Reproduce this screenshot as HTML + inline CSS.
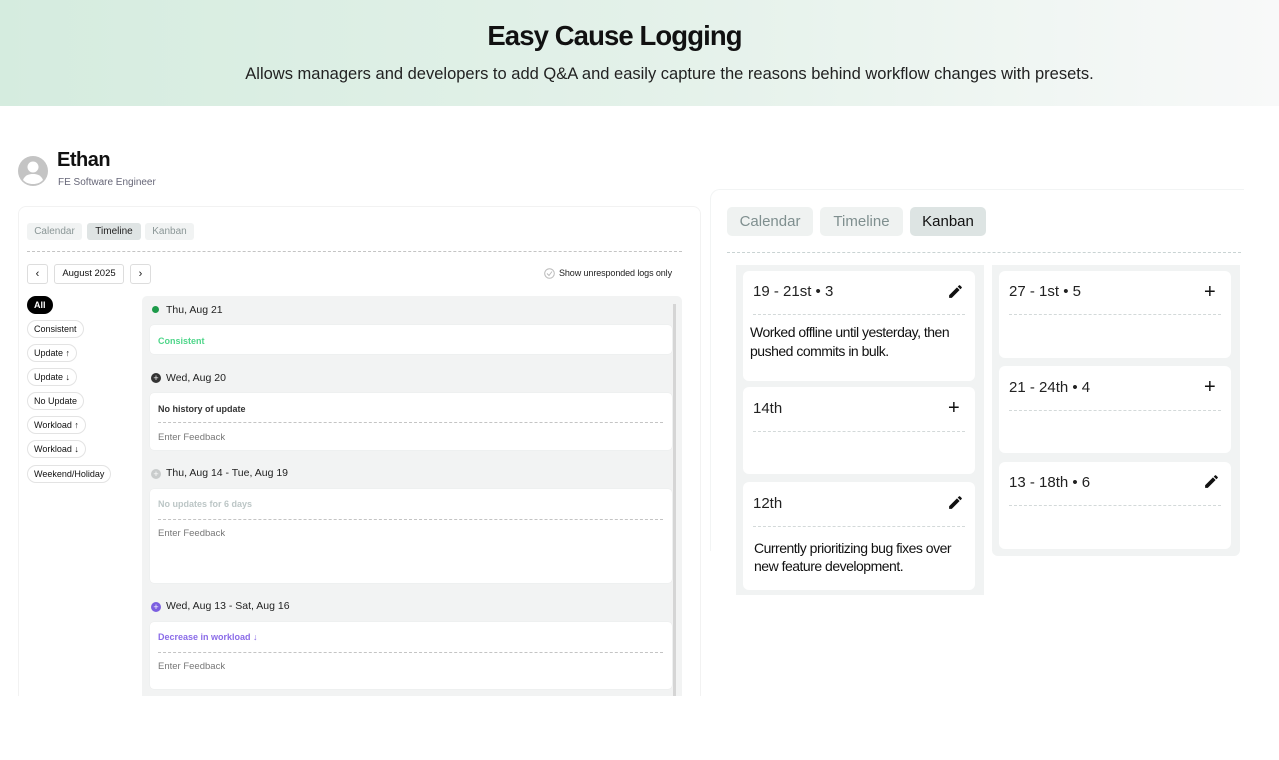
<!DOCTYPE html>
<html><head><meta charset="utf-8"><style>
*{box-sizing:border-box;margin:0;padding:0}
body{width:1279px;height:760px;background:#fff;font-family:"Liberation Sans",sans-serif;position:relative;overflow:hidden;color:#111}
.a{position:absolute}
.hdr{left:0;top:0;width:1279px;height:106px;background:linear-gradient(90deg,#d5ecdf 0%,#e3f1e9 50%,#f8f9f9 100%)}
.t1{width:1229px;top:20px;text-align:center;font-size:27.5px;font-weight:bold;letter-spacing:-0.9px;color:#111}
.t2{width:1339px;top:65px;text-align:center;font-size:16.5px;color:#222;letter-spacing:0}
.tab{font-size:10px;color:#8a9696;background:#f1f3f3;border-radius:3px;height:17px;line-height:17px;text-align:center}
.pill{left:27px;height:18px;line-height:16px;border:1px solid #e3e3e3;border-radius:9px;font-size:9px;padding:0 6px;color:#111;background:#fff}
.card{background:#fff;border-radius:4px;box-shadow:0 0 1px #ddd}
.dh{font-size:10.5px;color:#222}
.ef{font-size:9.5px;color:#777}
.dash{border-top:1px dashed #c4c4c4;height:0}
.kt{font-size:15px;color:#222}
.kc{background:#fff;border-radius:6px}
.kd{border-top:1px dashed #d3d9d9;height:0}
.ktab{font-size:15px;color:#7f8f8f;background:#eff2f1;border-radius:5px;height:29px;line-height:29px;text-align:center}
.ic{font-size:20px;line-height:20px;color:#111}
</style></head><body>
<div class="a hdr"></div>
<div class="a t1">Easy Cause Logging</div>
<div class="a t2" style="left:0">Allows managers and developers to add Q&amp;A and easily capture the reasons behind workflow changes with presets.</div>

<svg class="a" style="left:18px;top:156px" width="30" height="30" viewBox="0 0 30 30"><circle cx="15" cy="15" r="15" fill="#c4c4c4"/><circle cx="15" cy="11" r="5.5" fill="#fff"/><path d="M5 24c2-5 6-6 10-6s8 1 10 6c-3 3-6 4-10 4s-7-1-10-4z" fill="#fff"/></svg>
<div class="a" style="left:57px;top:149px;font-size:20px;font-weight:bold;letter-spacing:-0.5px">Ethan</div>
<div class="a" style="left:58px;top:177px;font-size:10px;color:#667">FE Software Engineer</div>

<div class="a" style="left:18px;top:206px;width:683px;height:490px;border:1px solid #f2f2f2;border-bottom:none;border-radius:8px 8px 0 0"></div>
<div class="a tab" style="left:27px;top:223px;width:55px">Calendar</div>
<div class="a tab" style="left:87px;top:223px;width:54px;background:#dfe4e4;color:#222">Timeline</div>
<div class="a tab" style="left:145px;top:223px;width:49px">Kanban</div>
<div class="a dash" style="left:27px;top:251px;width:655px"></div>
<div class="a" style="left:27px;top:264px;width:21px;height:20px;border:1px solid #ddd;border-radius:3px;font-size:11px;text-align:center;line-height:18px">‹</div>
<div class="a" style="left:54px;top:264px;width:70px;height:20px;border:1px solid #ddd;border-radius:3px;font-size:9.5px;text-align:center;line-height:18px">August 2025</div>
<div class="a" style="left:130px;top:264px;width:21px;height:20px;border:1px solid #ddd;border-radius:3px;font-size:11px;text-align:center;line-height:18px">›</div>
<svg class="a" style="left:544px;top:268px" width="11" height="11"><circle cx="5.5" cy="5.5" r="4.8" fill="none" stroke="#bbb"/><path d="M3 5.5l2 2 3-4" fill="none" stroke="#bbb"/></svg>
<div class="a" style="left:559px;top:268px;font-size:9px;color:#222;letter-spacing:-0.1px">Show unresponded logs only</div>

<div class="a pill" style="top:296px;background:#000;color:#fff;border-color:#000;font-weight:bold">All</div>
<div class="a pill" style="top:320px">Consistent</div>
<div class="a pill" style="top:344px">Update ↑</div>
<div class="a pill" style="top:368px">Update ↓</div>
<div class="a pill" style="top:392px">No Update</div>
<div class="a pill" style="top:416px">Workload ↑</div>
<div class="a pill" style="top:440px">Workload ↓</div>
<div class="a pill" style="top:465px">Weekend/Holiday</div>

<div class="a" style="left:142px;top:296px;width:540px;height:400px;background:#f2f3f3;border-radius:5px 5px 0 0"></div>
<div class="a" style="left:673px;top:304px;width:3px;height:392px;background:#d5d5d5"></div>

<div class="a" style="left:152px;top:306px;width:7px;height:7px;border-radius:50%;background:#1d9a4a"></div>
<div class="a dh" style="left:166px;top:304px">Thu, Aug 21</div>
<div class="a card" style="left:150px;top:325px;width:522px;height:29px"></div>
<div class="a" style="left:158px;top:336px;font-size:9px;font-weight:bold;color:#4fd68a">Consistent</div>

<div class="a" style="left:151px;top:373px;width:10px;height:10px;border-radius:50%;background:#333;color:#fff;font-size:9px;line-height:10px;text-align:center">+</div>
<div class="a dh" style="left:166px;top:372px">Wed, Aug 20</div>
<div class="a card" style="left:150px;top:393px;width:522px;height:57px"></div>
<div class="a" style="left:158px;top:404px;font-size:9px;font-weight:bold;color:#333">No history of update</div>
<div class="a dash" style="left:158px;top:422px;width:505px"></div>
<div class="a ef" style="left:158px;top:432px">Enter Feedback</div>

<div class="a" style="left:151px;top:469px;width:10px;height:10px;border-radius:50%;background:#c9cccc;color:#fff;font-size:9px;line-height:10px;text-align:center">+</div>
<div class="a dh" style="left:166px;top:467px">Thu, Aug 14 - Tue, Aug 19</div>
<div class="a card" style="left:150px;top:489px;width:522px;height:94px"></div>
<div class="a" style="left:158px;top:499px;font-size:9px;font-weight:bold;color:#bcc6c6">No updates for 6 days</div>
<div class="a dash" style="left:158px;top:519px;width:505px"></div>
<div class="a ef" style="left:158px;top:528px">Enter Feedback</div>

<div class="a" style="left:151px;top:602px;width:10px;height:10px;border-radius:50%;background:#7b5ee0;color:#fff;font-size:9px;line-height:10px;text-align:center">+</div>
<div class="a dh" style="left:166px;top:600px">Wed, Aug 13 - Sat, Aug 16</div>
<div class="a card" style="left:150px;top:622px;width:522px;height:67px"></div>
<div class="a" style="left:158px;top:632px;font-size:9px;font-weight:bold;color:#8b6ce8">Decrease in workload ↓</div>
<div class="a dash" style="left:158px;top:652px;width:505px"></div>
<div class="a ef" style="left:158px;top:661px">Enter Feedback</div>

<div class="a" style="left:710px;top:189px;width:534px;height:362px;border:1px solid #f2f4f4;border-right:none;border-bottom:none;border-radius:10px 0 0 0"></div>
<div class="a ktab" style="left:727px;top:207px;width:86px">Calendar</div>
<div class="a ktab" style="left:820px;top:207px;width:83px">Timeline</div>
<div class="a ktab" style="left:910px;top:207px;width:76px;background:#dde4e3;color:#111">Kanban</div>
<div class="a kd" style="left:727px;top:252px;width:514px;border-color:#c9d3d3"></div>

<div class="a" style="left:736px;top:265px;width:248px;height:330px;background:#f1f3f3"></div>
<div class="a" style="left:992px;top:265px;width:248px;height:291px;background:#f1f3f3;border-radius:0 0 6px 6px"></div>

<div class="a kc" style="left:743px;top:271px;width:232px;height:110px"></div>
<div class="a kt" style="left:753px;top:283px">19 - 21st • 3</div>
<svg class="a" style="left:947px;top:283px" width="17" height="17" viewBox="0 0 24 24"><path d="M3 17.25V21h3.75L17.81 9.940l-3.75-3.75L3 17.25zM20.71 7.04a1 1 0 000-1.41l-2.34-2.34a1 1 0 00-1.41 0l-1.83 1.830 3.75 3.75 1.83-1.83z" fill="#111"/></svg>
<div class="a kd" style="left:753px;top:314px;width:212px"></div>
<div class="a" style="left:750px;top:323px;font-size:14px;line-height:19px;color:#111;letter-spacing:-0.5px">Worked offline until yesterday, then<br>pushed commits in bulk.</div>

<div class="a kc" style="left:743px;top:387px;width:232px;height:87px"></div>
<div class="a kt" style="left:753px;top:400px">14th</div>
<div class="a ic" style="left:948px;top:398px">+</div>
<div class="a kd" style="left:753px;top:431px;width:212px"></div>

<div class="a kc" style="left:743px;top:482px;width:232px;height:108px"></div>
<div class="a kt" style="left:753px;top:495px">12th</div>
<svg class="a" style="left:947px;top:494px" width="17" height="17" viewBox="0 0 24 24"><path d="M3 17.25V21h3.75L17.81 9.94l-3.75-3.75L3 17.25zM20.71 7.04a1 1 0 000-1.41l-2.34-2.34a1 1 0 00-1.41 0l-1.83 1.83 3.75 3.75 1.83-1.83z" fill="#111"/></svg>
<div class="a kd" style="left:753px;top:526px;width:212px"></div>
<div class="a" style="left:754px;top:539px;font-size:14px;line-height:18px;color:#111;letter-spacing:-0.5px">Currently prioritizing bug fixes over<br>new feature development.</div>

<div class="a kc" style="left:999px;top:271px;width:232px;height:87px"></div>
<div class="a kt" style="left:1009px;top:283px">27 - 1st • 5</div>
<div class="a ic" style="left:1204px;top:282px">+</div>
<div class="a kd" style="left:1009px;top:314px;width:212px"></div>

<div class="a kc" style="left:999px;top:366px;width:232px;height:87px"></div>
<div class="a kt" style="left:1009px;top:379px">21 - 24th • 4</div>
<div class="a ic" style="left:1204px;top:377px">+</div>
<div class="a kd" style="left:1009px;top:410px;width:212px"></div>

<div class="a kc" style="left:999px;top:462px;width:232px;height:87px"></div>
<div class="a kt" style="left:1009px;top:474px">13 - 18th • 6</div>
<svg class="a" style="left:1203px;top:473px" width="17" height="17" viewBox="0 0 24 24"><path d="M3 17.25V21h3.75L17.81 9.94l-3.75-3.75L3 17.25zM20.71 7.04a1 1 0 000-1.41l-2.34-2.34a1 1 0 00-1.41 0l-1.83 1.83 3.75 3.75 1.83-1.83z" fill="#111"/></svg>
<div class="a kd" style="left:1009px;top:505px;width:212px"></div>
</body></html>
